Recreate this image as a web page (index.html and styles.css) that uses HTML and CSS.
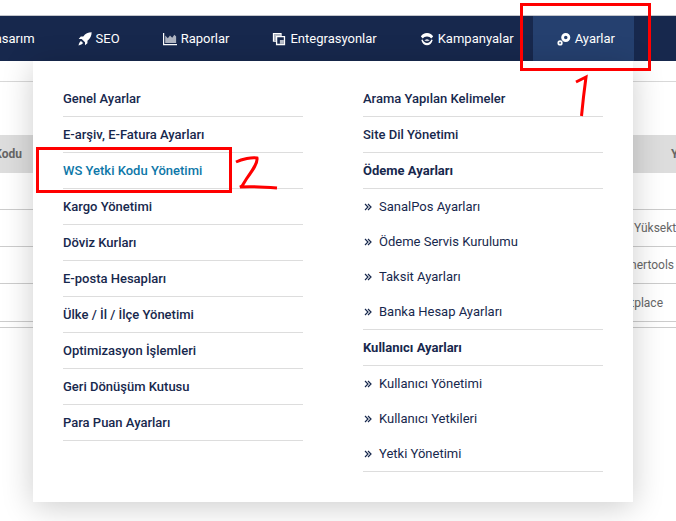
FILE: index.html
```html
<!DOCTYPE html>
<html lang="tr">
<head>
<meta charset="utf-8">
<title>Ayarlar</title>
<link rel="stylesheet" href="styles.css">
</head>
<body>
<nav class="nav">
  <a class="nav-item"><span>Tasarım</span></a>
  <a class="nav-item">
    <svg class="icon" viewBox="0 0 16 16"><path d="M15.6.4C11.6.4 8.4 2 6 5.2H3.2L.8 8h3.4L8 11.8v3.4l2.8-2.4V10C14 7.600 15.600 4.400 15.600.4ZM3.400 10.200C2 11 1 13 .6 15.400 3 15 5 14 5.800 12.600Z"/></svg>
    <span>SEO</span>
  </a>
  <a class="nav-item">
    <svg class="icon" viewBox="0 0 16 16"><path d="M0 1h1.400v12.600H16V15H0Z"/><path opacity=".65" d="M2.500 12.500V4l3 3 2.500-3 2.500 2.500L13 3l2 2v7.500Z"/></svg>
    <span>Raporlar</span>
  </a>
  <a class="nav-item">
    <svg class="icon" viewBox="0 0 16 16"><path fill-rule="evenodd" d="M1 1h10v3.500h4v10.500H4.500v-4H1Zm1.500 1.500v7.500h2V4.500h5v-2Zm3.500 3.500v7.500h7.500V6Z"/><path opacity=".7" d="M2.500 2.500h7v2h-5v5.500h-2ZM9 9h4.500v4.500H9Z"/></svg>
    <span>Entegrasyonlar</span>
  </a>
  <a class="nav-item">
    <svg class="icon" viewBox="0 0 16 16"><path d="M8 1c3.200 0 5.700 1.500 7 4L12.800 7.500C11.800 5.800 10.200 5 8 5S4.200 5.800 3.200 7.500L1 5c1.300-2.500 3.800-4 7-4Z"/><path d="M1.500 9 3 8.500c1 2.500 2.800 4 5 4s4-1.500 5-4l1.500.5C13.500 13 11 15 8 15S2.500 13 1.500 9Z"/><path d="M5 9.500c.8.800 1.800 1.200 3 1.200s2.200-.4 3-1.200L8 8Z" opacity=".8"/></svg>
    <span>Kampanyalar</span>
  </a>
  <a class="nav-item nav-active">
    <svg class="icon" viewBox="0 0 16 16"><path fill-rule="evenodd" d="M10 1a5.200 5.200 0 1 1 0 10.400A5.200 5.200 0 0 1 10 1Zm0 3.200a2 2 0 1 0 0 4 2 2 0 0 0 0-4Z"/><path fill-rule="evenodd" d="M3.500 9.500a3 3 0 1 1 0 6 3 3 0 0 1 0-6Zm0 2a1 1 0 1 0 0 2 1 1 0 0 0 0-2Z"/></svg>
    <span>Ayarlar</span>
  </a>
</nav>

<main class="page">
  <div class="table">
    <div class="row row-head"><div class="cell-left">Kodu</div><div></div><div class="cell-right cell-y">Y</div></div>
    <div class="row row-blank"></div>
    <div class="row"><div></div><div></div><div class="cell-right cell-start">Yüksektepe</div></div>
    <div class="row"><div></div><div></div><div class="cell-right cell-near">Partnertools</div></div>
    <div class="row row-last"><div></div><div></div><div class="cell-right cell-far">Next Marketplace</div></div>
  </div>
</main>

<section class="menu">
  <ul class="col">
    <li class="link">Genel Ayarlar</li>
    <li class="link">E-arşiv, E-Fatura Ayarları</li>
    <li class="link link-on">WS Yetki Kodu Yönetimi</li>
    <li class="link">Kargo Yönetimi</li>
    <li class="link">Döviz Kurları</li>
    <li class="link">E-posta Hesapları</li>
    <li class="link">Ülke / İl / İlçe Yönetimi</li>
    <li class="link">Optimizasyon İşlemleri</li>
    <li class="link">Geri Dönüşüm Kutusu</li>
    <li class="link">Para Puan Ayarları</li>
  </ul>
  <ul class="col">
    <li class="link">Arama Yapılan Kelimeler</li>
    <li class="link">Site Dil Yönetimi</li>
    <li class="link link-title">Ödeme Ayarları</li>
    <li class="group">
      <div class="sub"><svg class="chev" viewBox="0 0 8 8"><path d="M1 1l3 3-3 3M4 1l3 3-3 3"/></svg>SanalPos Ayarları</div>
      <div class="sub"><svg class="chev" viewBox="0 0 8 8"><path d="M1 1l3 3-3 3M4 1l3 3-3 3"/></svg>Ödeme Servis Kurulumu</div>
      <div class="sub"><svg class="chev" viewBox="0 0 8 8"><path d="M1 1l3 3-3 3M4 1l3 3-3 3"/></svg>Taksit Ayarları</div>
      <div class="sub"><svg class="chev" viewBox="0 0 8 8"><path d="M1 1l3 3-3 3M4 1l3 3-3 3"/></svg>Banka Hesap Ayarları</div>
    </li>
    <li class="link link-title">Kullanıcı Ayarları</li>
    <li class="group">
      <div class="sub"><svg class="chev" viewBox="0 0 8 8"><path d="M1 1l3 3-3 3M4 1l3 3-3 3"/></svg>Kullanıcı Yönetimi</div>
      <div class="sub"><svg class="chev" viewBox="0 0 8 8"><path d="M1 1l3 3-3 3M4 1l3 3-3 3"/></svg>Kullanıcı Yetkileri</div>
      <div class="sub"><svg class="chev" viewBox="0 0 8 8"><path d="M1 1l3 3-3 3M4 1l3 3-3 3"/></svg>Yetki Yönetimi</div>
    </li>
  </ul>
</section>

<svg class="marks" viewBox="0 0 676 521" aria-hidden="true">
  <rect x="521.500" y="4.500" width="128" height="65"/>
  <rect x="37.500" y="148.500" width="193" height="43"/>
  <path d="M576 82 586 77 583.500 97 581.500 116"/>
  <path d="M236 162C242 159 252 157 257 158 258 163 252 171 247 178L242 186 240 187C252 186 265 187 277 188"/>
</svg>
</body>
</html>
```
FILE: styles.css
```css
* { box-sizing: border-box; }

html, body { margin: 0; height: 100%; }

body {
  position: relative;
  width: 676px;
  height: 521px;
  overflow: hidden;
  background: #fff;
  padding-top: 15px;
  font-family: Roboto, "Liberation Sans", sans-serif;
  font-size: 13px;
}

.nav {
  display: flex;
  justify-content: flex-end;
  height: 46px;
  padding-right: 42px;
  background: #17284d;
  border-top: 1px solid #c4c6cc;
  overflow: hidden;
}

.nav-item {
  display: flex;
  flex: none;
  align-items: center;
  gap: 4px;
  padding: 0 19px 0 24px;
  color: #fff;
  font-weight: 400;
  white-space: nowrap;
}

.nav-active { background: #25406f; }

.icon { width: 14px; height: 14px; fill: #fff; flex: none; }

.page { padding-top: 20px; }

.table { margin-top: 53px; }

.page::before {
  content: "";
  display: block;
  border-top: 1px solid #d8d8d8;
}

.row {
  display: grid;
  grid-template-columns: 22px 1fr 42px;
  align-items: center;
  height: 37px;
  border-bottom: 1px solid #ccc;
  color: #666;
  font-size: 12px;
  white-space: nowrap;
}

.row-head {
  height: 38px;
  background: #ddd;
  border-bottom: 0;
  font-weight: 700;
  font-size: 12px;
}

.row-last {
  height: 38px;
  margin-bottom: 5px;
}

.table::after {
  content: "";
  display: block;
  border-top: 1px solid #ccc;
}

.cell-left {
  display: flex;
  justify-content: flex-end;
  overflow: hidden;
}

.cell-right {
  display: flex;
  justify-content: flex-end;
}

.cell-near { padding-right: 2px; }

.cell-far { padding-right: 13px; }

.cell-start { justify-content: flex-start; }

.cell-y { justify-content: flex-start; padding-left: 37px; }

.menu {
  position: absolute;
  left: 33px;
  top: 61px;
  display: flex;
  gap: 60px;
  width: 600px;
  height: 441px;
  padding: 20px 30px 30px;
  background: #fff;
  box-shadow: 0 5px 30px rgba(0, 0, 0, .2);
}

.col {
  width: 240px;
  margin: 0;
  padding: 0;
  list-style: none;
  color: #17284d;
}

.link {
  display: flex;
  align-items: center;
  height: 36px;
  border-bottom: 1px solid #ddd;
  font-weight: 500;
}

.link-on { color: #0d77a8; }

.link-title { font-weight: 700; }

.group { border-bottom: 1px solid #ddd; }

.sub {
  display: flex;
  align-items: center;
  height: 35px;
}

.chev {
  flex: none;
  width: 8px;
  height: 8px;
  margin: 0 7px 0 1px;
  fill: none;
  stroke: #17284d;
  stroke-width: 1.2;
}

.marks {
  position: absolute;
  left: 0;
  top: 0;
  width: 676px;
  height: 521px;
  fill: none;
  stroke: #f00;
  stroke-width: 3;
}
```
